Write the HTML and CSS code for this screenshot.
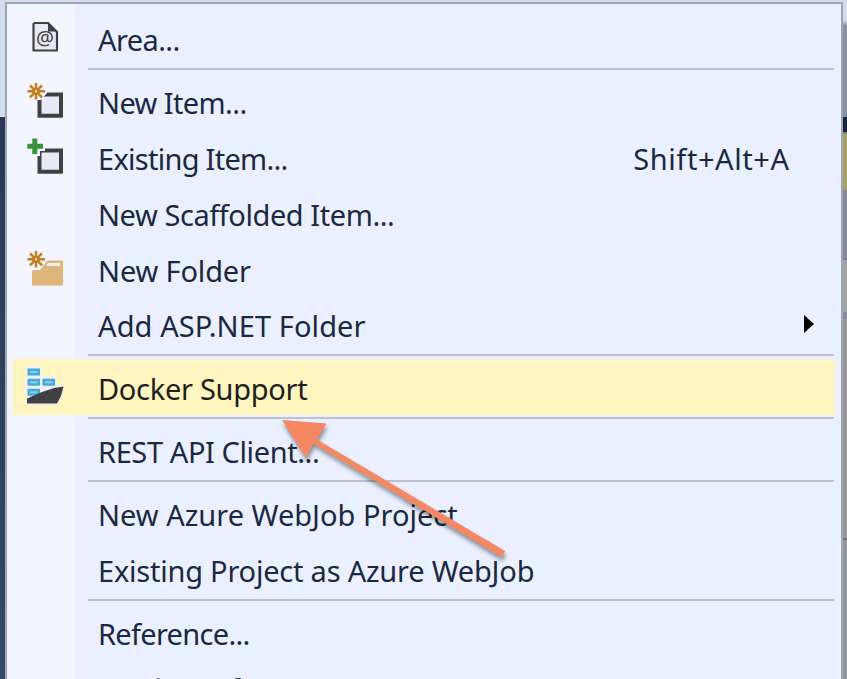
FILE: index.html
```html
<!DOCTYPE html>
<html lang="en">
<head>
<meta charset="utf-8">
<title>Add menu</title>
<link rel="stylesheet" href="styles.css">
</head>
<body>
<div class="desktop">
  <div class="strip-left"></div>
  <nav class="menu">
    <div class="item"><span class="icon">
      <svg width="70" height="56" viewBox="7 10 70 56"><path d="M34.500 23H48L57 32v18.500H33.500V24z" fill="#e9e8f5" stroke="#404142" stroke-width="2.200" stroke-linejoin="round"/><path d="M48 22l9.500 9.500H48z" fill="#404142"/><text x="45" y="45" text-anchor="middle" class="at">@</text></svg>
    </span><span class="label l-area">Area...</span></div>
    <hr>
    <div class="item"><span class="icon">
      <svg width="70" height="56" viewBox="7 73 70 56"><path d="M39.500 94.500H61v21.300H39.500z" fill="#e9e9f7" stroke="#404142" stroke-width="4"/><path d="M36 91h11v2l-6 7h-5z" fill="#f2f4fe"/><g class="spark"><path d="M36 83v5M36 94.500v5M27.500 91.300h5.500M39 91.300h6M30 85.300l4 4M38 93.300l4 4M42 85.300l-4 4M34 93.300l-4 4"/><circle cx="36" cy="91.300" r="2.400"/></g></svg>
    </span><span class="label l-newitem">New Item...</span></div>
    <div class="item"><span class="icon">
      <svg width="70" height="56" viewBox="7 129 70 56"><path d="M39.500 150.500H61v21.300H39.500z" fill="#e9e9f7" stroke="#404142" stroke-width="4"/><path d="M36 147h9v4h-5v5h-4z" fill="#f2f4fe"/><path d="M32.300 138.500h5v5.200H43v5h-5.700V154h-5v-5.300h-5v-5h5z" fill="#399338"/></svg>
    </span><span class="label l-exitem">Existing Item...</span><span class="shortcut">Shift+Alt+A</span></div>
    <div class="item"><span class="label l-scaff">New Scaffolded Item...</span></div>
    <div class="item"><span class="icon">
      <svg width="70" height="56" viewBox="7 240 70 56"><path d="M33 270h7l7-9.500h15a1 1 0 0 1 1 1V284a1.500 1.500 0 0 1-1.500 1.500h-28A1.500 1.500 0 0 1 32 284v-13z" fill="#dcb67a"/><path d="M48 263h12v3H46z" fill="#f3f0ee"/><g class="spark"><path d="M36 251v5M36 262.500v5M27.500 259.300h5.500M39 259.300h6M30 253.300l4 4M38 261.300l4 4M42 253.300l-4 4M34 261.300l-4 4"/><circle cx="36" cy="259.300" r="2.400"/></g></svg>
    </span><span class="label l-folder">New Folder</span></div>
    <div class="item"><span class="label l-asp">Add ASP.NET Folder</span><svg class="chevron" width="10" height="18" viewBox="0 0 10 18"><path d="M0 0l10 9-10 9z"/></svg></div>
    <hr>
    <div class="item active"><span class="icon">
      <svg width="70" height="56" viewBox="7 359 70 56"><path d="M26 366.500h15.500v10H56V385l9 0-3 12-4 7.500H26z" fill="#eef1fa"/><g fill="#47a9d5"><path d="M27.500 368.500h12.500v7H27.500zM27.500 378.700h12.500v7H27.500zM42.500 378.700H55v7H42.500zM27.500 388.700h12.500v7H27.500z"/></g><g fill="#83d2f0"><path d="M30 371h7.500v2H30zM30 381.200h7.500v2H30zM45 381.200h7.500v2H45zM30 391.200h7.500v2H30z"/></g><path d="M27 403.500V398.500L42 392 54 388 63.500 386.500 61 396l-4 7.500z" fill="#404142"/></svg>
    </span><span class="label l-docker">Docker Support</span></div>
    <hr>
    <div class="item"><span class="label l-rest">REST API Client...</span></div>
    <hr>
    <div class="item"><span class="label l-azure">New Azure WebJob Project</span></div>
    <div class="item"><span class="label l-exazure">Existing Project as Azure WebJob</span></div>
    <hr>
    <div class="item"><span class="label l-ref">Reference...</span></div>
    <div class="item"><span class="label l-service">Service Reference...</span></div>
  </nav>
  <div class="strip-right"></div>
  <svg class="arrow" width="847" height="679" viewBox="0 0 847 679"><path d="M282 420l44.500 3.500-9.500 16 188 111.500-2 4.500-2.500 1-187-113-7.500 14z" fill="#f58762"/></svg>
</div>
</body>
</html>
```
FILE: styles.css
```css
* { box-sizing: border-box; }
body {
  margin: 0;
  overflow: hidden;
  font-family: "Noto Sans", "Open Sans", sans-serif;
  font-size: 29px;
  color: #1b293e;
}
.desktop {
  position: relative;
  display: flex;
  width: 847px;
  height: 679px;
  padding-top: 2px;
  overflow: hidden;
  background: #d6dbe9;
}
.strip-left {
  width: 5px;
  height: 677px;
  background: linear-gradient(#d6dbe9 115px, #293955 115px, #35496a);
}
.strip-right {
  width: 4px;
  height: 677px;
  background: linear-gradient(#d6dbe9 18px, #8d8f9c 24px, #8d8f9c 115px, #17233d 115px, #17233d 130px, #777e91 130px, #777e91 132px, #aaa163 132px, #aaa163 188px, #858b9b 188px, #858b9b 256px, #777c8c 256px, #777c8c 258px, #a5a4a3 258px, #a5a4a3 310px, #858ca0 310px, #858ca0 317px, #999 317px, #999 536px, #6d7180 536px, #6d7180 538px, #92949e 538px);
}
.menu {
  width: 838px;
  height: 720px;
  padding-top: 6.200px;
  border: 2px solid #9ba7b7;
  background: linear-gradient(90deg, #f2f4fe 68px, #eaf0ff 68px);
}
.item {
  display: flex;
  align-items: center;
  height: 55.800px;
  margin: 0 6px;
  padding-left: 85px;
  white-space: nowrap;
}
.active { background: #fdf4bf; color: #1e1e1e; }
.icon { width: 70px; height: 56px; margin-left: -91px; margin-right: 21px; flex: none; }
.icon svg { display: block; }
.at { font-size: 20px; fill: #404142; }
.spark { fill: none; stroke: #c27d1a; stroke-width: 2.500; }
.label, .shortcut { line-height: 40px; padding-top: 4px; }
.l-area, .l-newitem { letter-spacing: -0.6px; }
.l-exitem { letter-spacing: -0.720px; padding-top: 5px; }
.l-scaff { letter-spacing: -0.430px; padding-top: 5px; }
.l-folder { letter-spacing: -0.150px; padding-top: 5px; }
.l-asp { letter-spacing: 0.100px; }
.l-docker { letter-spacing: -0.300px; }
.l-rest { letter-spacing: -0.400px; }
.l-exazure { letter-spacing: -0.220px; }
.l-ref, .l-service { letter-spacing: -0.700px; }
.l-ref { padding-top: 5px; }
.l-service { padding-top: 2.500px; }
.shortcut { margin-left: auto; margin-right: 45.400px; padding-top: 5px; letter-spacing: 0.580px; }
.chevron { margin-left: auto; margin-right: 21px; }
hr {
  height: 2px;
  margin: 2.200px 7px 3px 81px;
  border: 0;
  background: #bdc1cd;
}
.arrow {
  position: absolute;
  left: 0;
  top: 0;
  filter: drop-shadow(1px 4px 2px rgba(0, 0, 0, 0.4));
}
```
